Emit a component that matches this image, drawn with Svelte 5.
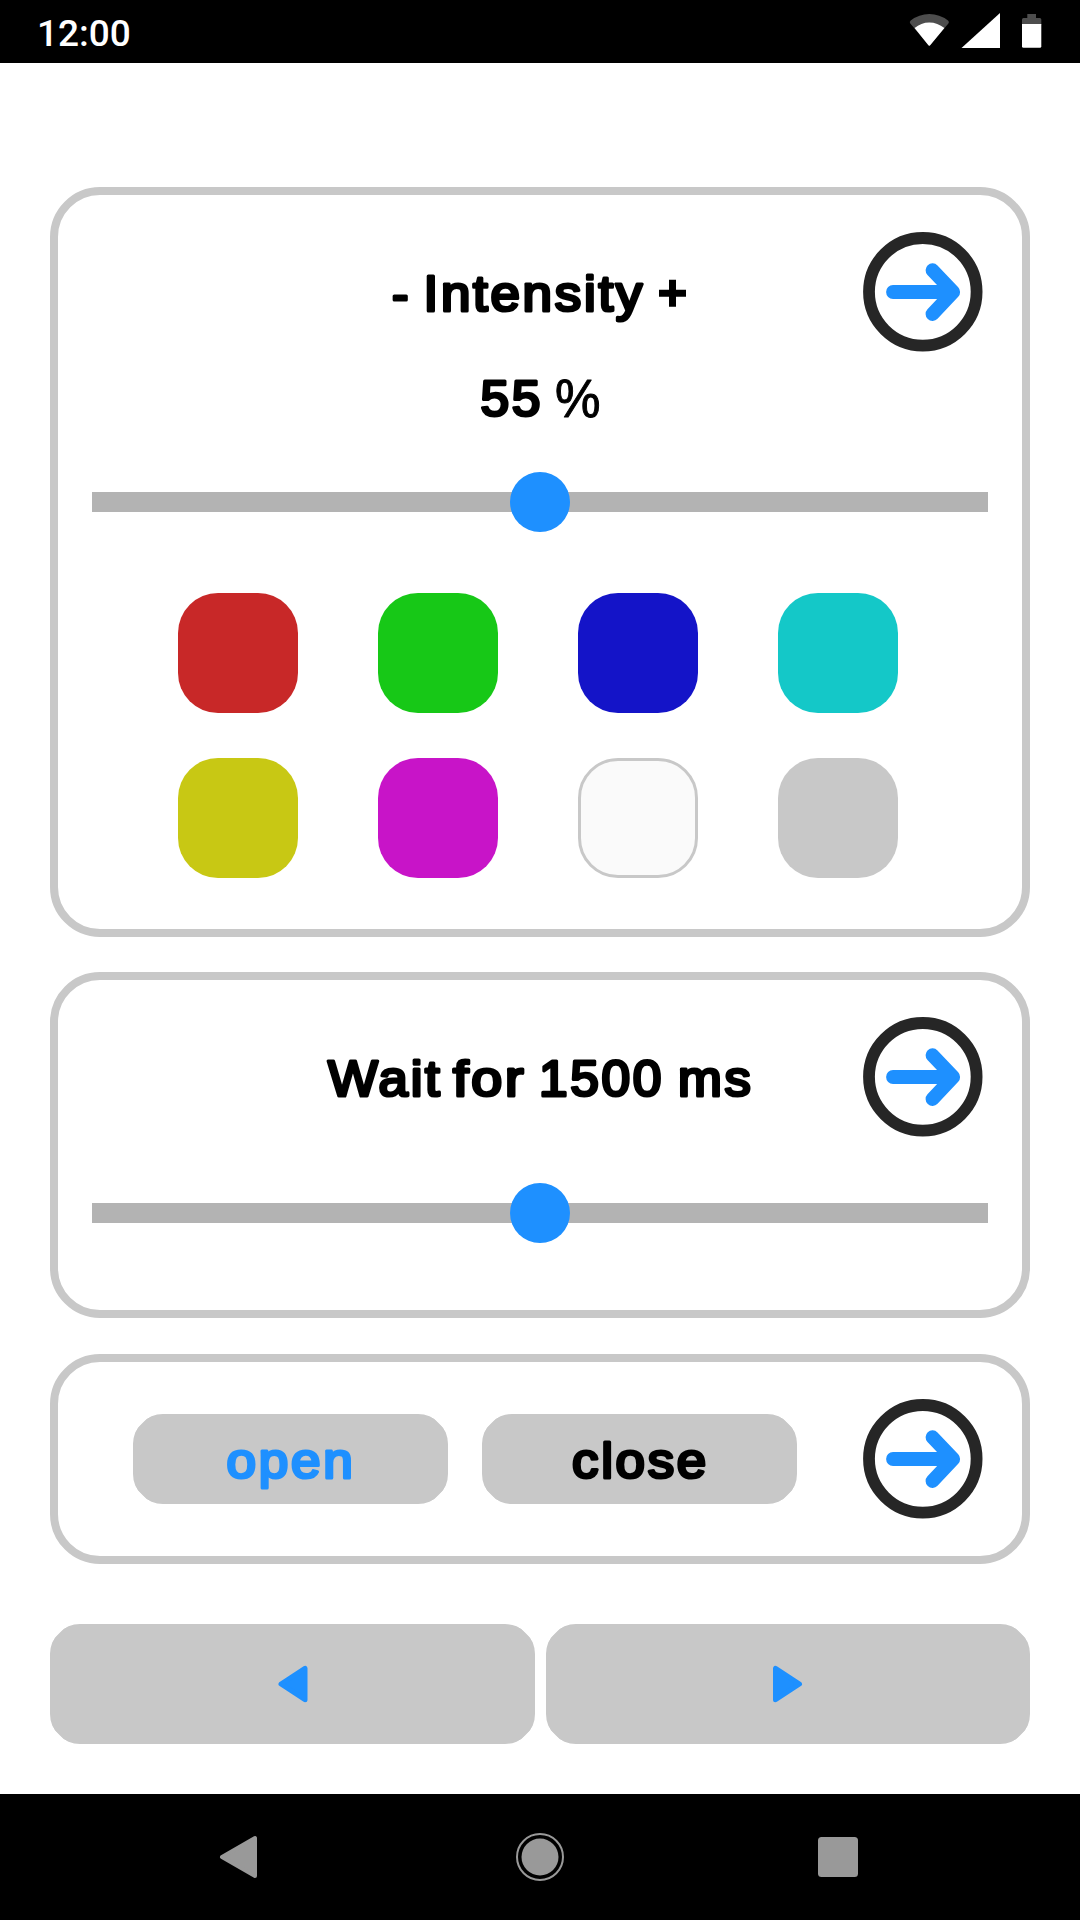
<script>
  const swatches = [
    { name: 'red', color: '#c82828' },
    { name: 'green', color: '#17c817' },
    { name: 'blue', color: '#1414c8' },
    { name: 'cyan', color: '#14c8c8' },
    { name: 'yellow', color: '#c8c814' },
    { name: 'magenta', color: '#c814c8' },
    { name: 'white', color: '#fafafa' },
    { name: 'grey', color: '#c8c8c8' }
  ];

  // Each word: text, left edge and set width inside a 500-unit wide label
  const intensity = [['-', 102, 19], ['Intensity', 133.5, 221.5]];
  const percent = [['55', 190.5, 62.5]];
  const wait = [['Wait', 38, 114.5], ['for', 163, 73.5], ['1500', 249, 125]  , ['ms', 388, 75.5]];
  const open = [['open', 93.5, 129]];
  const close = [['close', 90, 137]];
</script>

{#snippet words(list)}
  {#each list as [text, x, width]}
    <text class="word" {x} y="54" textLength={width} lengthAdjust="spacingAndGlyphs">{text}</text>
  {/each}
{/snippet}

{#snippet go()}
  <button class="go" aria-label="Run">
    <svg viewBox="0 0 120 120" width="120" height="120">
      <circle cx="59.8" cy="59.8" r="53.8" fill="#fff" stroke="#262626" stroke-width="11.8" />
      <path d="M30 60H88M69.5 38.2L90.2 60L69.5 82" />
    </svg>
  </button>
{/snippet}

{#snippet slider()}
  <div class="slider"><span class="thumb"></span></div>
{/snippet}

<div class="screen">
  <header class="status">
    <span class="clock">12:00</span>
    <svg viewBox="0 0 140 63" width="140" height="63">
      <path fill="#4d4d4d" d="M29.3 46L10.3 23.5Q9 21.8 10.7 20.5Q19 14 29.3 14T48 20.5Q49.7 21.8 48.4 23.5Z" />
      <path fill="#fff" d="M14.6 28Q21 22.4 29.3 22.4T44.4 28L30.6 44.8Q29.3 46.6 28 44.8Z" />
      <path fill="#fff" d="M61.5 48L100 13V48Z" />
      <path fill="#4d4d4d" d="M122 25V19.5Q122 18 123.5 18H127.3V14H136V18H139.8Q141.3 18 141.3 19.5V25Z" />
      <path fill="#fff" d="M122 24H141.3V46.3Q141.3 47.8 139.8 47.8H123.5Q122 47.8 122 46.3Z" />
    </svg>
  </header>

  <main>
    <section class="card light">
      <div class="head">
        <svg class="label" viewBox="0 0 500 70" width="500" height="70">
          {@render words(intensity)}
          <path d="M369 36.2H396M382.5 22.7V49.7" stroke="#000" stroke-width="7" />
        </svg>
        {@render go()}
      </div>
      <svg class="label value" viewBox="0 0 500 70" width="500" height="70">
        {@render words(percent)}
        <text class="percent" x="265" y="54.5" textLength="45.5" lengthAdjust="spacingAndGlyphs">%</text>
      </svg>
      {@render slider()}
      <div class="swatches">
        {#each swatches as s}
          <button class="swatch" class:outlined={s.name === 'white'} aria-label={s.name} style="background:{s.color}"></button>
        {/each}
      </div>
    </section>

    <section class="card wait">
      <div class="head">
        <svg class="label" viewBox="0 0 500 70" width="500" height="70">{@render words(wait)}</svg>
        {@render go()}
      </div>
      {@render slider()}
    </section>

    <section class="card valve">
      <button class="key active">
        <svg viewBox="0 0 315 70" width="315" height="70">{@render words(open)}</svg>
      </button>
      <button class="key">
        <svg viewBox="0 0 315 70" width="315" height="70">{@render words(close)}</svg>
      </button>
      {@render go()}
    </section>

    <nav class="pager">
      <button class="key" aria-label="Previous">
        <svg viewBox="0 0 30 38" width="30" height="38"><path d="M3 19L27 3.3V34.7Z" /></svg>
      </button>
      <button class="key" aria-label="Next">
        <svg viewBox="0 0 30 38" width="30" height="38"><path d="M26.5 19L2.5 3.3V34.7Z" /></svg>
      </button>
    </nav>
  </main>

  <footer class="system">
    <svg viewBox="0 0 50 50" width="50" height="50"><path d="M8 25L41 6V44Z" stroke="#999" stroke-width="4" stroke-linejoin="round" /></svg>
    <svg viewBox="0 0 50 50" width="50" height="50">
      <circle cx="25" cy="25" r="18.5" />
      <circle class="ring" cx="25" cy="25" r="23" />
    </svg>
    <svg viewBox="0 0 50 50" width="50" height="50"><rect x="2" y="5" width="40" height="40" rx="3.5" /></svg>
  </footer>
</div>

<style>
  :global(body) { margin: 0; background: #fff; }
  button { border: 0; padding: 0; margin: 0; background: none; font: inherit; color: #000; }
  svg { display: block; }
  .screen {
    width: 1080px; height: 1920px; display: flex; flex-direction: column;
    background: #fff; overflow: hidden; font-family: "Liberation Sans", Arial, sans-serif;
  }
  .status {
    height: 63px; flex: none; background: #000; color: #fff; box-sizing: border-box;
    display: flex; justify-content: space-between; align-items: center; padding: 0 40px 0 37px;
  }
  .status svg { overflow: visible; }
  .clock { font: 500 37px/44px Roboto, sans-serif; padding-top: 5px; }
  main { flex: 1; box-sizing: border-box; padding: 124px 50px 0; display: flex; flex-direction: column; }
  .card { box-sizing: border-box; border: 8px solid #c8c8c8; border-radius: 50px; padding-top: 37px; flex: none; }
  .light { height: 750px; }
  .wait { height: 346px; margin-top: 35px; }
  .valve { height: 210px; margin-top: 36px; display: flex; gap: 34px; align-items: center; padding: 0 39px 0 75px; }
  .valve .key { width: 315px; height: 90px; }
  .valve .go { margin-left: auto; }
  .head { display: grid; grid-template-columns: 120px 1fr 120px; padding: 0 39px; justify-items: center; align-items: center; }
  .head .label { grid-column: 2; }
  .head .go { grid-column: 3; }
  .value { margin: 10px auto 0; }
  .label { overflow: visible; }
  .word {
    font-size: 50.5px; letter-spacing: 2.6px; fill: currentColor; stroke: currentColor; stroke-width: 3.2px;
    stroke-linejoin: round; stroke-linecap: round;
  }
  .percent { font-size: 54px; stroke: #000; stroke-width: 1px; stroke-linejoin: round; }
  .go { width: 120px; height: 120px; }
  .go path { fill: none; stroke: #1e90ff; stroke-width: 13.8; stroke-linecap: round; stroke-linejoin: round; }
  .slider { height: 20px; margin: 60px 34px 0; background: #b3b3b3; display: flex; justify-content: center; align-items: center; }
  .thumb { width: 60px; height: 60px; border-radius: 50%; background: #1e90ff; flex: none; }
  .wait .slider { margin-top: 66px; }
  .swatches { display: grid; grid-template-columns: repeat(4, 120px); gap: 45px 80px; margin: 81px 0 0 120px; }
  .swatch { width: 120px; height: 120px; border-radius: 40px; box-sizing: border-box; }
  .outlined { border: 3px solid #c8c8c8; }
  .key {
    background: #c8c8c8; border-radius: 30px; display: flex; align-items: center; justify-content: center;
    clip-path: polygon(
      0 16px, 4px 16px, 4px 14.5px, 14.5px 4px, 16px 4px, 16px 0,
      calc(100% - 16px) 0, calc(100% - 16px) 4px, calc(100% - 14.5px) 4px, calc(100% - 4px) 14.5px, calc(100% - 4px) 16px, 100% 16px,
      100% calc(100% - 16px), calc(100% - 4px) calc(100% - 16px), calc(100% - 4px) calc(100% - 14.5px), calc(100% - 14.5px) calc(100% - 4px), calc(100% - 16px) calc(100% - 4px), calc(100% - 16px) 100%,
      16px 100%, 16px calc(100% - 4px), 14.5px calc(100% - 4px), 4px calc(100% - 14.5px), 4px calc(100% - 16px), 0 calc(100% - 16px)
    );
  }
  .active { color: #1e90ff; }
  .pager { display: grid; grid-template-columns: 485px 484px; gap: 11px; margin-top: 60px; }
  .pager .key { height: 120px; }
  .pager path { fill: #1e90ff; stroke: #1e90ff; stroke-width: 5; stroke-linejoin: round; }
  .system { height: 126px; flex: none; background: #000; display: flex; align-items: center; justify-content: space-between; padding: 0 214px; }
  .system svg { fill: #999; }
  .system .ring { fill: none; stroke: #999; stroke-width: 2; }
</style>
